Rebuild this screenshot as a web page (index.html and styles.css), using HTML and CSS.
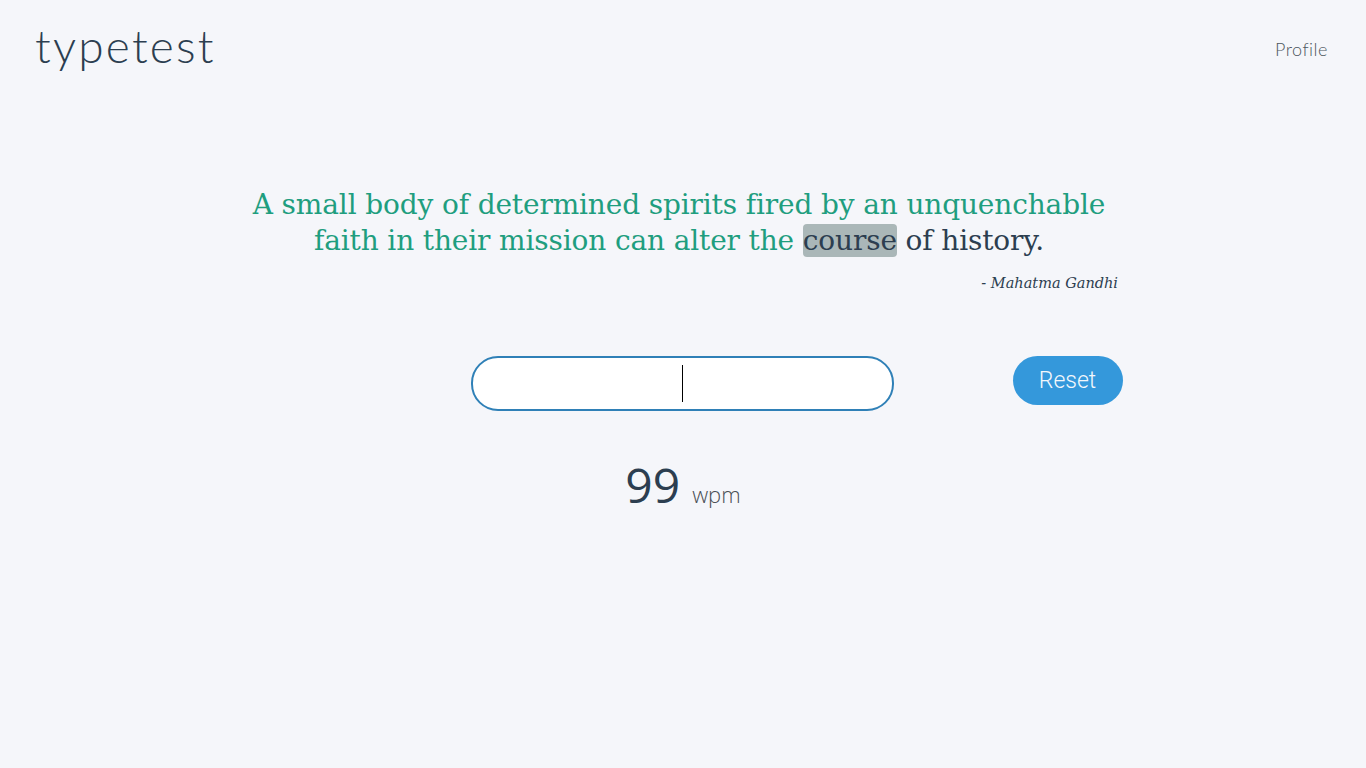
FILE: index.html
```html
<!DOCTYPE html>
<html>
<head>
<meta charset="utf-8">
<link rel="stylesheet" href="styles.css">
</head>
<body>
<header class="top">
  <div class="logo">typetest</div>
  <a class="nav-link" href="#">Profile</a>
</header>
<main class="main">
  <section class="quote">
    <p class="quote-text"><span class="done">A small body of determined spirits fired by an unquenchable faith in their mission can alter the </span><span class="current">course</span> of history.</p>
    <p class="author">- Mahatma Gandhi</p>
  </section>
  <section class="controls">
    <div class="input-wrap">
      <div class="typing-input"><span class="caret"></span></div>
    </div>
    <button class="reset">Reset</button>
  </section>
  <section class="stats">
    <span class="wpm-num">99</span><span class="wpm-unit">wpm</span>
  </section>
</main>
</body>
</html>
```
FILE: styles.css
```css
html, body {
  margin: 0;
  padding: 0;
}
body {
  background: #f5f6fa;
  width: 1366px;
  height: 768px;
  color: #2c3e50;
  font-family: "Lato", "Open Sans", sans-serif;
}
.top {
  display: flex;
  justify-content: space-between;
  align-items: flex-start;
  padding: 18px 38px 0 35px;
  height: 80px;
  box-sizing: border-box;
}
.logo {
  font-family: "Lato", sans-serif;
  font-weight: 300;
  font-size: 46px;
  line-height: 56px;
  color: #2c3e50;
  letter-spacing: 2.2px;
}
.nav-link {
  margin-top: 20px;
  font-family: "Lato", sans-serif;
  font-weight: 300;
  font-size: 18px;
  letter-spacing: 0.5px;
  color: #4d5660;
  text-decoration: none;
}
.main {
  display: flex;
  flex-direction: column;
  align-items: center;
}
.quote {
  width: 880px;
  margin-top: 107px;
  margin-right: 8px;
}
.quote-text {
  margin: 0;
  text-align: center;
  font-family: "DejaVu Serif", serif;
  font-size: 28px;
  line-height: 36px;
  color: #2c3e50;
  letter-spacing: -0.14px;
}
.done {
  color: #1f9e7f;
}
.current {
  background: #aab7b8;
  border-radius: 4px;
}
.author {
  margin: 16px 0 0;
  text-align: right;
  font-family: "DejaVu Serif", serif;
  font-style: italic;
  font-size: 14.5px;
  color: #2c3e50;
  padding-right: 1px;
}
.controls {
  display: flex;
  align-items: flex-start;
  margin-top: 65px;
  margin-left: 227px;
}
.typing-input {
  width: 419px;
  height: 51px;
  border: 2px solid #2f80b7;
  border-radius: 27px;
  background: #ffffff;
  display: flex;
  align-items: center;
  justify-content: center;
}
.caret {
  width: 1px;
  height: 37px;
  background: #000;
}
.reset {
  margin-left: 119px;
  width: 110px;
  height: 49px;
  border: none;
  border-radius: 25px;
  background: #3498db;
  color: #f2f7fb;
  font-family: "Roboto", sans-serif;
  font-weight: 300;
  font-size: 23px;
  padding: 0;
}
.stats {
  display: flex;
  align-items: baseline;
  margin-top: 41px;
}
.wpm-num {
  font-family: "Open Sans", sans-serif;
  font-size: 48px;
  color: #2c3e50;
}
.wpm-unit {
  margin-left: 12px;
  font-family: "Open Sans", sans-serif;
  font-size: 22px;
  font-weight: 300;
  color: #4a4f55;
}
```
